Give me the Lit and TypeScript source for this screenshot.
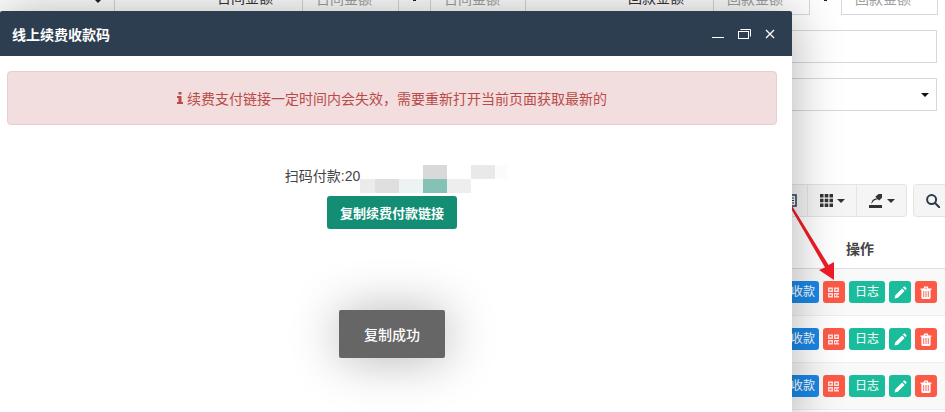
import { LitElement, html, css, svg } from "lit";
import { customElement } from "lit/decorators.js";

const FONT = css`"Liberation Sans", "Noto Sans CJK SC", sans-serif`;

const qr = svg`<svg width="11" height="11" viewBox="0 0 11 11" fill="#fff" fill-opacity=".82"><path fill-rule="evenodd" d="M0 .5h5v4.500H0zM1.500 2v1.500h2V2zM6 .5h5v4.500H6zM7.500 2v1.500h2V2zM0 6h5v4.500H0zM1.500 7.500V9h2V7.500zM6 6h5v1.500H9.500V9H11v1.500H6zM7 7.500V9h1.300V7.500z"/></svg>`;
const pencil = svg`<svg width="13" height="13" viewBox="0 0 13 13" fill="#fff"><path d="M0.500 12.500l.8-3.300 6.800-6.800 2.500 2.500-6.800 6.800zM8.900 1.600l.9-.9c.4-.3.9-.3 1.200 0l1.300 1.300c.3.4.3.9 0 1.200l-.9.9z"/></svg>`;
const trash = svg`<svg width="12" height="13" viewBox="0 0 12 13" fill="#fff"><path fill-rule="evenodd" d="M.5 2.500h3L4.200.6h3.600l.7 1.900h3v1.200h-.9v7.900c0 .8-.5 1.400-1 1.400H2.400c-.5 0-1-.6-1-1.400V3.700H.5zM4.700 2.500h2.600L7 1.700H5zM3.300 5v6h.9V5zM5.550 5v6h.9V5zM7.800 5v6h.9V5z"/></svg>`;

const MOSAIC = [
  "transparent", "transparent", "transparent", "#d9d9d9", "transparent", "#e9e9e9", "#fbfbfb",
  "#ebebeb", "#dfdfdf", "#edf3f3", "#85c2b5", "#eeeeee", "transparent", "transparent",
];

@customElement("app-root")
export class AppRoot extends LitElement {
  static styles = css`
    :host {
      display: block;
      position: relative;
      width: 945px;
      height: 412px;
      overflow: hidden;
      background: #fff;
      font-family: ${FONT};
      font-size: 14px;
      color: #333;
    }
    .page {
      display: flex;
      flex-direction: column;
      width: 945px;
    }
    .filters {
      display: flex;
      margin-top: -17px;
      height: 32px;
    }
    .cell {
      box-sizing: border-box;
      height: 32px;
      line-height: 30px;
      border: 1px solid #d3d9e0;
      border-left-width: 0;
      color: #a0a0a0;
      padding-left: 13px;
      flex: none;
    }
    .cell.left { border-left-width: 1px; }
    .cell.select {
      display: flex;
      justify-content: flex-end;
      padding: 15px 12px 0 0;
      color: #222;
      line-height: 1;
    }
    .label {
      box-sizing: border-box;
      flex: none;
      height: 32px;
      line-height: 30px;
      text-align: right;
      padding-right: 29px;
      border-right: 1px solid #d3d9e0;
      color: #333;
    }
    .sep {
      box-sizing: border-box;
      flex: none;
      width: 31px;
      height: 32px;
      display: flex;
      align-items: flex-start;
      justify-content: center;
      padding-top: 14px;
    }
    .sep i {
      display: block;
      width: 3px;
      height: 4px;
      background: #222;
    }
    .caret {
      display: block;
      width: 0;
      height: 0;
      border-left: 4px solid transparent;
      border-right: 4px solid transparent;
      border-top: 4px solid currentColor;
    }
    .field {
      box-sizing: border-box;
      width: 937px;
      height: 33px;
      margin-top: 15px;
      border: 1px solid #d3d9e0;
      display: flex;
      align-items: center;
      justify-content: flex-end;
      padding-right: 7px;
      color: #111;
    }
    .toolbar {
      display: flex;
      gap: 6px;
      margin-top: 73px;
      margin-left: 760px;
      height: 33px;
      color: #333;
    }
    .group { display: flex; }
    .tool {
      box-sizing: border-box;
      height: 33px;
      background: #f5f5f5;
      border: 1px solid #e4e4e4;
      border-left-width: 0;
      display: flex;
      align-items: center;
      justify-content: center;
      gap: 4px;
      flex: none;
    }
    .tool.list { width: 48px; justify-content: flex-end; padding-right: 10px; }
    .tool.cols { width: 49px; }
    .tool.export { width: 50px; border-radius: 0 4px 4px 0; }
    .tool.search {
      width: 40px;
      border-left-width: 1px;
      border-radius: 4px;
      justify-content: flex-start;
      padding-left: 12px;
    }
    .thead {
      box-sizing: border-box;
      height: 41px;
      margin-top: 11px;
      border-bottom: 1px solid #ddd;
      display: flex;
      justify-content: flex-end;
      align-items: center;
      padding: 0 71px 0 0;
      font-weight: bold;
      color: #444;
    }
    .row {
      box-sizing: border-box;
      height: 47px;
      border-bottom: 1px solid #eee;
      display: flex;
      justify-content: flex-end;
      gap: 4px;
      padding: 12px 8px 0 0;
      background: #f9f9f9;
    }
    .row.even { background: #fff; }
    .btn {
      box-sizing: border-box;
      height: 22px;
      border-radius: 3px;
      color: #fff;
      font-size: 12px;
      line-height: 22px;
      padding: 0 6px;
      display: flex;
      align-items: center;
      justify-content: center;
      white-space: nowrap;
    }
    .btn.ic { width: 22px; padding: 0; }
    .blue { background: #1a87e6; padding: 0 4px; }
    .red { background: #fc5a47; }
    .teal { background: #1abc9c; }

    .modal {
      position: absolute;
      left: 0;
      top: 11px;
      width: 792px;
      height: 420px;
      background: #fff;
      border-radius: 2px 2px 0 0;
      box-shadow: 1px 1px 50px rgba(0, 0, 0, 0.3);
      display: flex;
      flex-direction: column;
    }
    .head {
      height: 45px;
      flex: none;
      background: #2d3e50;
      border-radius: 2px 2px 0 0;
      color: #fff;
      display: flex;
      align-items: center;
      justify-content: space-between;
      padding: 0 17px 0 12px;
    }
    .title { font-weight: bold; font-size: 14px; }
    .winbtns { display: flex; gap: 14px; align-items: center; }
    .winbtns svg { display: block; }
    .body {
      display: flex;
      flex-direction: column;
      align-items: center;
      padding: 15px 15px 0 7px;
    }
    .alert {
      box-sizing: border-box;
      width: 770px;
      height: 54px;
      background: #f2dede;
      border: 1px solid #ebccd1;
      border-radius: 4px;
      color: #b94a48;
      display: flex;
      align-items: center;
      justify-content: center;
      gap: 4px;
    }
    .payline {
      display: flex;
      align-items: flex-start;
      margin-top: 40px;
      padding-left: 8px;
      color: #444;
    }
    .payline .t { line-height: 22px; }
    .mosaic {
      display: grid;
      grid-template-columns: 15px 24px 24px 24px 24px 24px 12px;
      grid-auto-rows: 14px;
    }
    .copy {
      box-sizing: border-box;
      width: 130px;
      height: 33px;
      margin-top: 3px;
      border-radius: 3px;
      background: #138e74;
      color: #fff;
      font-size: 13px;
      font-weight: bold;
      display: flex;
      align-items: center;
      justify-content: center;
    }
    .toast {
      position: absolute;
      left: 339px;
      top: 310px;
      width: 106px;
      height: 48px;
      border-radius: 2px;
      background: #666;
      color: #fff;
      font-weight: 500;
      display: flex;
      align-items: center;
      justify-content: center;
      box-shadow: 1px 1px 50px rgba(0, 0, 0, 0.3);
    }
    .arrow { position: absolute; left: 775px; top: 185px; }
  `;

  private renderRow(even: boolean) {
    return html`<div class="row ${even ? "even" : ""}">
      <div class="btn blue">线上收款</div>
      <div class="btn ic red">${qr}</div>
      <div class="btn teal">日志</div>
      <div class="btn ic teal">${pencil}</div>
      <div class="btn ic red">${trash}</div>
    </div>`;
  }

  render() {
    return html`
      <div class="page">
        <div class="filters">
          <div class="cell select" style="width:115px"><span class="caret"></span></div>
          <div class="label" style="width:188px">日间金额</div>
          <div class="cell" style="width:96px">日间金额</div>
          <div class="sep"><i></i></div>
          <div class="cell left" style="width:96px">日间金额</div>
          <div class="label" style="width:188px">回款金额</div>
          <div class="cell" style="width:96px">回款金额</div>
          <div class="sep"><i></i></div>
          <div class="cell left" style="width:97px">回款金额</div>
        </div>
        <div class="field"></div>
        <div class="field"><span class="caret"></span></div>
        <div class="toolbar">
          <div class="group">
            <div class="tool list">
              <svg width="12" height="13" viewBox="0 0 12 13" fill="none" stroke="#2a3a55" stroke-width="1.500"><rect x="1" y="1" width="10" height="11"/><path d="M3 4h6M3 6.500h6M3 9h6" stroke-width="1"/></svg>
            </div>
            <div class="tool cols">
              <svg width="13" height="13" viewBox="0 0 13 13" fill="#333"><path d="M0 0h3.500v3.500H0zM4.700 0h3.600v3.500H4.700zM9.500 0H13v3.500H9.500zM0 4.700h3.500v3.600H0zM4.700 4.700h3.600v3.600H4.700zM9.500 4.700H13v3.600H9.500zM0 9.500h3.500V13H0zM4.700 9.500h3.600V13H4.700zM9.500 9.500H13V13H9.500z"/></svg>
              <span class="caret"></span>
            </div>
            <div class="tool export">
              <svg width="14" height="14" viewBox="0 0 14 14" fill="#333"><path d="M0 11h13v3H0z"/><path d="M2.500 10c0-3.800 2.200-5.500 5.500-5.500L6.300 2.800 9.500 0 13 0v3.800L10.200 6.600 8.800 5.200C6 5.400 4 7 2.500 10z"/></svg>
              <span class="caret"></span>
            </div>
          </div>
          <div class="tool search">
            <svg width="14" height="14" viewBox="0 0 14 14" fill="none" stroke="#2d3a4a" stroke-width="2"><circle cx="5.600" cy="5.600" r="4.500"/><path d="M9 9l4.300 4.300" stroke-linecap="round"/></svg>
          </div>
        </div>
        <div class="thead">操作</div>
        ${this.renderRow(false)} ${this.renderRow(true)} ${this.renderRow(false)}
      </div>

      <svg class="arrow" width="70" height="100" viewBox="775 185 70 100">
        <path d="M782 193L783.500 192 828.500 265 834 262 834 280 819 270 825 267.500z" fill="#f01c28"/>
      </svg>

      <div class="modal">
        <div class="head">
          <div class="title">线上续费收款码</div>
          <div class="winbtns">
            <svg width="12" height="12" viewBox="0 0 12 12" stroke="#fff" fill="none"><path d="M0 9.500h12"/></svg>
            <svg width="13" height="10" viewBox="0 0 13 10" stroke="#fff" fill="none"><rect x=".5" y="2.500" width="10" height="7" stroke-width="1"/><path d="M2.500 .5h10v7"/></svg>
            <svg width="10" height="10" viewBox="0 0 10 10" stroke="#fff" stroke-width="1.300" fill="none"><path d="M1 1l8 8M9 1l-8 8"/></svg>
          </div>
        </div>
        <div class="body">
          <div class="alert">
            <svg width="6" height="12" viewBox="0 0 6 12" fill="#b94a48"><path d="M1.500 0h3v2.500h-3zM0 4h4.500v6H6v2H0v-2h1.500V6H0z"/></svg>
            <span>续费支付链接一定时间内会失效，需要重新打开当前页面获取最新的</span>
          </div>
          <div class="payline">
            <span class="t">扫码付款:20</span>
            <div class="mosaic">
              ${MOSAIC.map((c) => html`<span style="background:${c}"></span>`)}
            </div>
          </div>
          <div class="copy">复制续费付款链接</div>
        </div>
      </div>

      <div class="toast">复制成功</div>
    `;
  }
}
